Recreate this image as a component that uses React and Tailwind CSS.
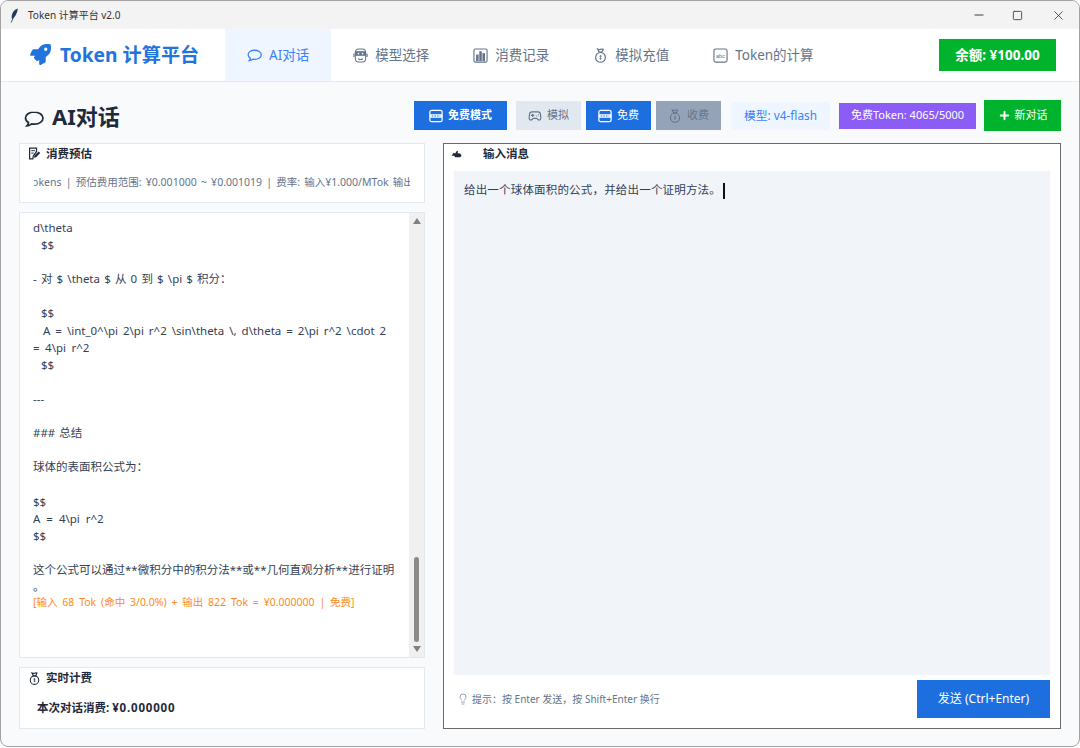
import { Gamepad2, Lightbulb, Minus, Square, X, Plus } from "lucide-react";
import { FaRocket } from "react-icons/fa";

const Feather = ({ className }) => (
  <svg viewBox="0 0 10 16" className={className}>
    <path d="M9 .5C5.500 1.500 3 4.500 2.500 8.500c-.1 1.200 0 2.300.3 3.200C5.500 10.500 8.500 6 9 .5z" fill="#27395c" />
    <path d="M7 3.500 2 15.500" stroke="#27395c" strokeWidth="0.900" fill="none" />
  </svg>
);

const Bubble = ({ className }) => (
  <svg viewBox="0 0 20 18" fill="none" stroke="currentColor" strokeWidth="1.7" className={className}>
    <path d="M10 2C5.200 2 1.500 4.600 1.500 8c0 1.900 1.200 3.500 3 4.600 0 1.200-.6 2.300-1.500 3.200 1.900-.1 3.500-.9 4.700-1.900.9.200 1.800.2 2.800.2 4.800 0 8.500-2.700 8.500-6.100S14.800 2 10 2z" />
  </svg>
);

const Robot = ({ className }) => (
  <svg viewBox="0 0 16 16" fill="none" stroke="currentColor" strokeWidth="1.100" className={className}>
    <rect x="2.500" y="1" width="11" height="14" rx="3.500" />
    <path d="M1 6v3.500M15 6v3.500" strokeWidth="1.300" />
    <rect x="2.500" y="4" width="11" height="3.800" rx="1" fill="currentColor" />
    <circle cx="5.800" cy="5.900" r="0.900" fill="#fff" stroke="none" />
    <circle cx="10.200" cy="5.900" r="0.900" fill="#fff" stroke="none" />
    <path d="M5.500 11.500c1.500 1 3.500 1 5 0" />
  </svg>
);

const Chart = ({ className }) => (
  <svg viewBox="0 0 16 16" className={className}>
    <rect x="1" y="1" width="14" height="14" rx="1.500" fill="none" stroke="currentColor" strokeWidth="1.200" />
    <rect x="3.300" y="7" width="2.700" height="7" fill="currentColor" />
    <rect x="6.700" y="3.500" width="2.700" height="10.500" fill="currentColor" />
    <rect x="10.100" y="5.500" width="2.700" height="8.500" fill="currentColor" />
  </svg>
);

const MoneyBag = ({ className }) => (
  <svg viewBox="0 0 16 16" fill="none" stroke="currentColor" strokeWidth="1.300" className={className}>
    <path d="M5 1.200c1 .6 2 .6 3 .2 1-.4 2-.4 3-.1L9.500 4.500h-3z" />
    <circle cx="8" cy="10" r="5.200" />
    <path d="M8 7.500v5M6.800 8.800h2.400M6.800 11.200h2.400" strokeWidth="0.800" />
  </svg>
);

const Abc = ({ className }) => (
  <svg viewBox="0 0 16 16" className={className}>
    <rect x="1" y="1" width="14" height="14" rx="2" fill="none" stroke="currentColor" strokeWidth="1.200" />
    <text x="8" y="10.500" textAnchor="middle" fontSize="6" fill="currentColor" fontFamily="Liberation Sans">abc</text>
  </svg>
);

const FreeIcon = ({ className }) => (
  <svg viewBox="0 0 16 16" className={className}>
    <rect x="1" y="1.500" width="14" height="13" rx="2" fill="none" stroke="currentColor" strokeWidth="1.400" />
    <rect x="1" y="6" width="14" height="4" fill="currentColor" />
    <path d="M3 8h10" stroke="#1d6fdf" strokeWidth="1.100" strokeDasharray="2 1" />
  </svg>
);

const Memo = ({ className }) => (
  <svg viewBox="0 0 16 16" className={className}>
    <path d="M2 1.500h8.500v4L6.500 11 6 14.500H2z" fill="none" stroke="currentColor" strokeWidth="1.500" />
    <path d="M4 4.500h4.500M4 7.500h3" stroke="currentColor" strokeWidth="1.200" />
    <path d="M8 10.500l5-5 2 2-5 5-2.800.8z" fill="currentColor" />
  </svg>
);

const Hand = ({ className }) => (
  <svg viewBox="0 0 12 8" className={className}>
    <path d="M0.500 6 3 2.500l1.500 1L6.500 .5l1.200.6-.6 2L10 3.500l1.500 2.500-1.500 1.500H4.500L3.500 6z" fill="currentColor" />
  </svg>
);

const NavTab = ({ icon: Icon, label, active }) => (
  <div className={`flex items-center gap-[7px] px-[22px] h-full text-[13.500px] ${active ? "bg-[#eff6ff] text-[#3b82f6]" : "text-[#64748b]"}`}>
    <Icon className="w-[15px] h-[15px] shrink-0" />
    <span>{label}</span>
  </div>
);

const ToolBtn = ({ icon: Icon, label, className }) => (
  <div className={`flex items-center justify-center gap-[5px] h-[29px] text-[11px] ${className}`}>
    <Icon className="w-[14px] h-[14px] shrink-0" />
    <span>{label}</span>
  </div>
);

const chatLines = [
  ["d\\theta"],
  ["  $$"],
  [""],
  ["- 对 $ \\theta $ 从 0 到 $ \\pi $ 积分：", "[word-spacing:1.200px]"],
  [""],
  ["  $$"],
  ["  A = \\int_0^\\pi 2\\pi r^2 \\sin\\theta \\, d\\theta = 2\\pi r^2 \\cdot 2", "[word-spacing:2px]"],
  ["= 4\\pi r^2", "[word-spacing:2.500px]"],
  ["  $$"],
  [""],
  ["---"],
  [""],
  ["### 总结"],
  [""],
  ["球体的表面积公式为："],
  [""],
  ["$$"],
  ["A = 4\\pi r^2", "[word-spacing:3px]"],
  ["$$"],
  [""],
  ["这个公式可以通过**微积分中的积分法**或**几何直观分析**进行证明"],
  ["。"],
];

export default function App() {
  return (
    <div className="w-[1080px] h-[748px] bg-white overflow-hidden" style={{ fontFamily: '"Noto Sans", "Noto Sans CJK SC", sans-serif' }}>
      <div className="w-[1080px] h-[747px] flex flex-col rounded-[8px] border border-[#a3a3a3] overflow-hidden bg-[#f8fafc] text-[#1e293b]">
        {/* title bar */}
        <div className="h-[28px] shrink-0 flex items-center bg-[#f3f3f3] text-[10px] text-[#333] pl-[8px]">
          <Feather className="w-[10px] h-[15px]" />
          <span className="ml-[9px]">Token 计算平台 v2.0</span>
          <div className="ml-auto flex items-center gap-[26px] pr-[13px] text-[#333]">
            <Minus className="w-[14px] h-[14px]" strokeWidth={1.600} />
            <Square className="w-[11px] h-[11px]" strokeWidth={1.800} />
            <X className="w-[15px] h-[15px] ml-[2px]" strokeWidth={1.300} />
          </div>
        </div>

        {/* nav */}
        <div className="h-[53px] shrink-0 flex items-center bg-white border-b border-[#e2e8f0]">
          <div className="w-[224px] flex items-center gap-[9px] pl-[29px] text-[#2173dd]">
            <FaRocket className="w-[21px] h-[21px]" />
            <span className="text-[19.200px] font-bold whitespace-nowrap">Token 计算平台</span>
          </div>
          <NavTab icon={Bubble} label="AI对话" active />
          <NavTab icon={Robot} label="模型选择" />
          <NavTab icon={Chart} label="消费记录" />
          <NavTab icon={MoneyBag} label="模拟充值" />
          <NavTab icon={Abc} label="Token的计算" />
          <div className="ml-auto mr-[23px] w-[117px] h-[32px] flex items-center justify-center bg-[#00b32c] text-white text-[13.500px] font-bold">
            余额: ¥100.00
          </div>
        </div>

        {/* body */}
        <div className="flex-1 min-h-0 flex flex-col pl-[18px] pr-[18px] pt-[19px] pb-[17px]">
          <div className="flex items-center h-[29px] mb-[13px]">
            <Bubble className="w-[20px] h-[18px] ml-[5px] mt-[6px] text-[#1e293b]" />
            <span className="ml-[8px] mt-[2px] text-[22px] font-bold mr-auto">AI对话</span>
            <ToolBtn icon={FreeIcon} label="免费模式" className="w-[93px] bg-[#1d6fdf] text-white font-bold text-[11.500px]" />
            <ToolBtn icon={Gamepad2} label="模拟" className="w-[65px] ml-[9px] bg-[#e2e8f0] text-[#64748b]" />
            <ToolBtn icon={FreeIcon} label="免费" className="w-[65px] ml-[5px] bg-[#1d6fdf] text-white" />
            <ToolBtn icon={MoneyBag} label="收费" className="w-[65px] ml-[5px] bg-[#94a3b8] text-[#64748b]" />
            <div className="w-[99px] h-[28px] ml-[10px] flex items-center justify-center bg-[#eff6ff] text-[#3b82f6] text-[11.800px]">模型: v4-flash</div>
            <div className="w-[137px] h-[26px] ml-[9px] flex items-center justify-center bg-[#8b5cf6] text-white text-[11px]">免费Token: 4065/5000</div>
            <div className="w-[77px] h-[31px] ml-[8px] flex items-center justify-center gap-[4px] bg-[#00b32c] text-white text-[11px]">
              <Plus className="w-[13px] h-[13px]" strokeWidth={3.500} />
              新对话
            </div>
          </div>

          <div className="flex-1 min-h-0 flex gap-[18px]">
            {/* left column */}
            <div className="w-[406px] shrink-0 flex flex-col gap-[9px]">
              <div className="h-[60px] shrink-0 bg-white border border-[#e2e8f0] px-[8px]">
                <div className="flex items-center gap-[5px] h-[19px] text-[11.500px] font-bold">
                  <Memo className="w-[13px] h-[13px]" />
                  消费预估
                </div>
                <div className="mt-[10px] ml-[6px] w-[376px] h-[18px] overflow-hidden text-[10.500px] leading-[18px] text-[#64748b] whitespace-nowrap [word-spacing:1.500px]">
                  <span className="inline-block -ml-[7px]">Tokens | 预估费用范围: ¥0.001000 ~ ¥0.001019 | 费率: 输入¥1.000/MTok 输出¥2.000/MTok</span>
                </div>
              </div>

              <div className="flex-1 min-h-0 flex bg-white border border-[#e2e8f0]">
                <div className="flex-1 min-w-0 pt-[10px] pl-[13px]">
                  <div className="h-[400px] overflow-hidden text-[11.500px] leading-[17.100px] text-[#334155]">
                    <div className="-mt-[4px]">
                      {chatLines.map(([line, spacing], i) => (
                        <div key={i} className={`h-[17.100px] whitespace-pre ${spacing || "[word-spacing:1px]"}`}>{line}</div>
                      ))}
                      <div className="text-[#f98b25] text-[10.500px] leading-[14px] [word-spacing:2.100px]">[输入 68 Tok (命中 3/0.0%) + 输出 822 Tok = ¥0.000000 | 免费]</div>
                    </div>
                  </div>
                </div>
                <div className="w-[15px] shrink-0 flex flex-col items-center bg-[#f0f0f0] py-[5px]">
                  <div className="w-0 h-0 border-x-[4px] border-x-transparent border-b-[6px] border-b-[#808080]" />
                  <div className="flex-1" />
                  <div className="w-[5px] h-[85px] rounded-full bg-[#8a8a8a]" />
                  <div className="w-0 h-0 mt-[4px] border-x-[4px] border-x-transparent border-t-[6px] border-t-[#808080]" />
                </div>
              </div>

              <div className="h-[62px] shrink-0 bg-white border border-[#e2e8f0] px-[8px]">
                <div className="flex items-center gap-[5px] h-[20px] text-[11.500px] font-bold">
                  <MoneyBag className="w-[13px] h-[13px]" />
                  实时计费
                </div>
                <div className="mt-[11px] ml-[9px] text-[11.500px] font-bold">
                  本次对话消费: <span className="tracking-[0.800px]">¥0.000000</span>
                </div>
              </div>
            </div>

            {/* right panel */}
            <div className="flex-1 min-w-0 flex flex-col bg-white border border-[#6b6b6b] px-[10px]">
              <div className="h-[27px] shrink-0 flex items-center pb-[8px]">
                <Hand className="w-[11px] h-[8px] -ml-[3px]" />
                <span className="ml-[21px] text-[11.500px] font-bold">输入消息</span>
              </div>
              <div className="flex-1 min-h-0 bg-[#f1f5f9] px-[10px] py-[10px] text-[11.500px] leading-[18px] text-[#334155]">
                <span className="tracking-[0.180px]">给出一个球体面积的公式，并给出一个证明方法。</span>
                <span className="inline-block w-[2px] h-[16px] ml-[2px] align-middle bg-[#111]" />
              </div>
              <div className="h-[38px] mt-[5px] mb-[10px] shrink-0 flex items-center">
                <Lightbulb className="w-[12px] h-[12px] ml-[3px] text-[#94a3b8]" />
                <span className="ml-[3px] text-[10px] text-[#64748b]">提示：按 Enter 发送，按 Shift+Enter 换行</span>
                <div className="ml-auto w-[133px] h-[38px] flex items-center justify-center bg-[#1d6fdf] text-white text-[12px]">发送 (Ctrl+Enter)</div>
              </div>
            </div>
          </div>
        </div>
      </div>
    </div>
  );
}
